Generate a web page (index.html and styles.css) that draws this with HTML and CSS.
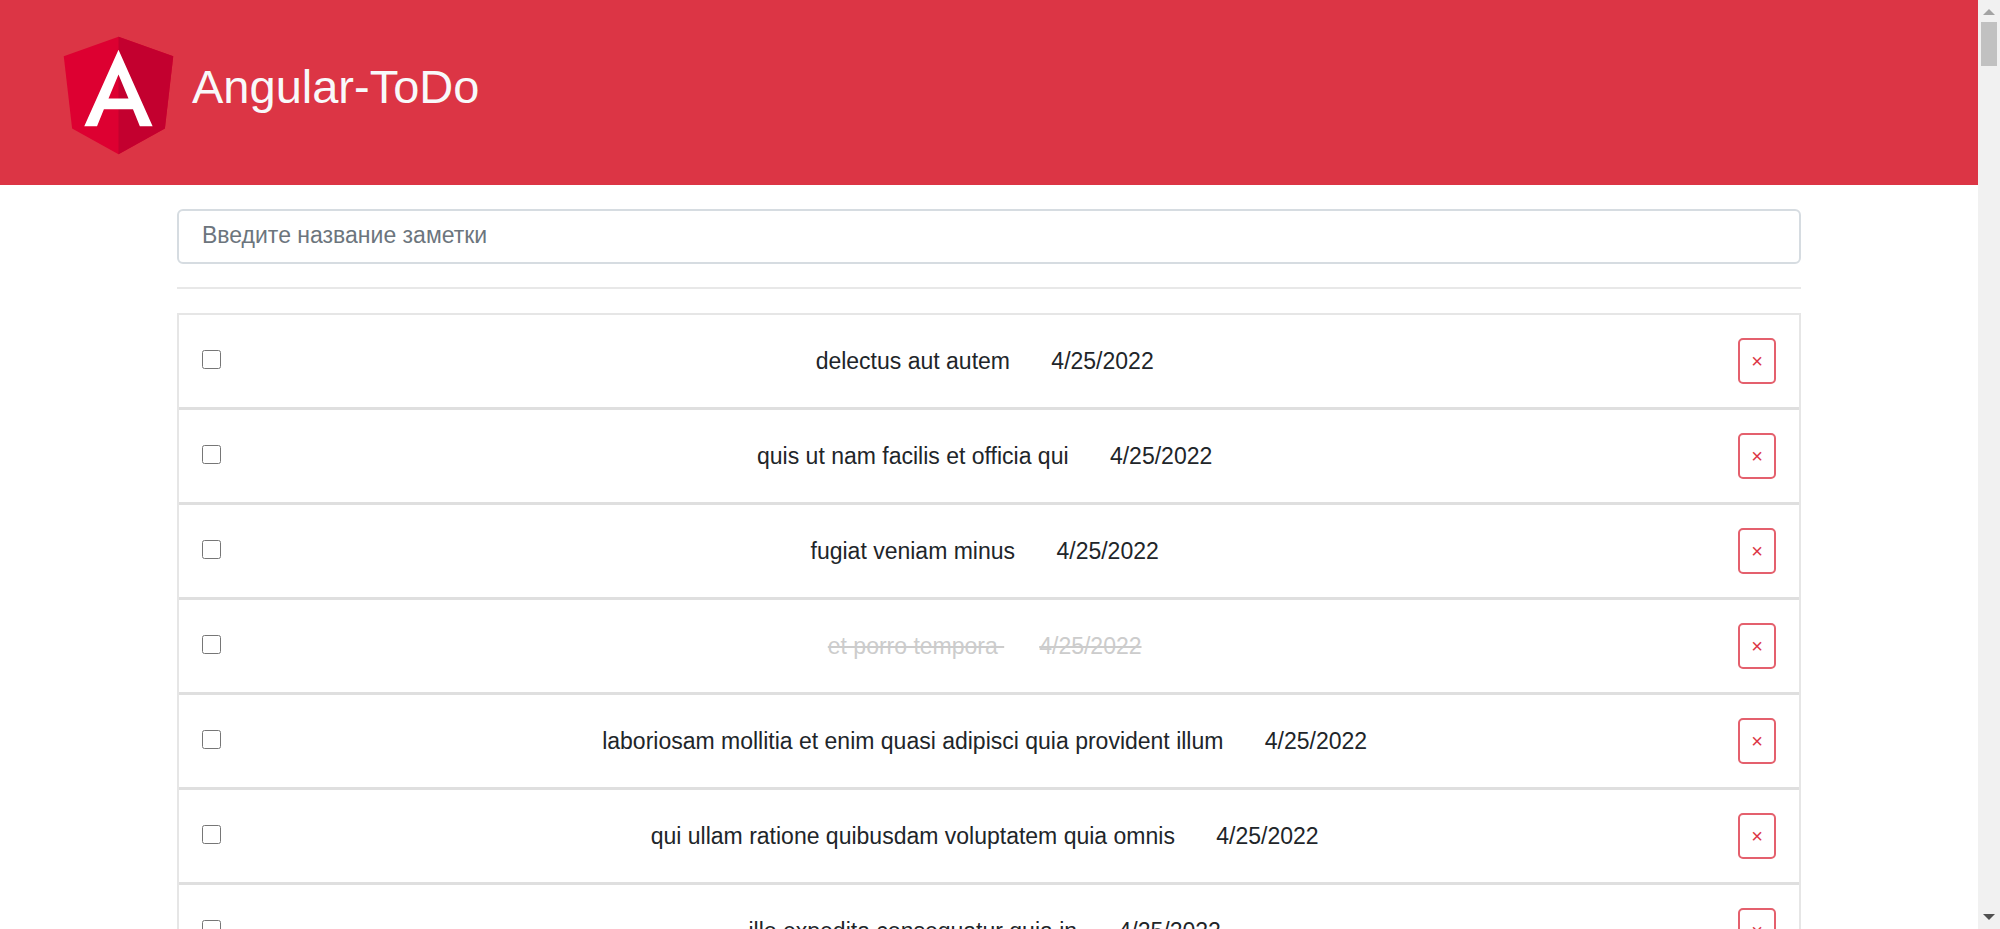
FILE: index.html
```html
<!DOCTYPE html>
<html lang="ru">
<head>
<meta charset="utf-8">
<meta name="viewport" content="width=device-width, initial-scale=1">
<title>Angular-ToDo</title>
<link rel="stylesheet" href="styles.css">
</head>
<body>
<div class="shell">
  <div class="page">
    <header class="header">
      <svg class="logo" viewBox="0 0 250 250" aria-hidden="true">
        <path fill="#dd0031" d="M125 30 31.900 63.200l14.200 123.100L125 230l78.900-43.700 14.200-123.100z"/>
        <path fill="#c3002f" d="M125 30v200l78.900-43.700 14.200-123.100z"/>
        <path fill="#fff" d="M125 52.100 66.800 182.600h21.700l11.700-29.200h49.400l11.700 29.200H183L125 52.100zm17 83.300h-34l17-40.900z"/>
      </svg>
      <h1 class="brand">Angular-ToDo</h1>
    </header>
    <main class="container">
      <input class="note-input" type="text" placeholder="Введите название заметки" aria-label="Введите название заметки">
      <hr class="divider">
      <ul class="list">
        <li class="row">
          <input class="check" type="checkbox" id="t1">
          <label class="task" for="t1">delectus aut autem <time class="date">4/25/2022</time></label>
          <button class="remove" type="button">×</button>
        </li>
        <li class="row">
          <input class="check" type="checkbox" id="t2">
          <label class="task" for="t2">quis ut nam facilis et officia qui <time class="date">4/25/2022</time></label>
          <button class="remove" type="button">×</button>
        </li>
        <li class="row">
          <input class="check" type="checkbox" id="t3">
          <label class="task" for="t3">fugiat veniam minus <time class="date">4/25/2022</time></label>
          <button class="remove" type="button">×</button>
        </li>
        <li class="row">
          <input class="check" type="checkbox" id="t4">
          <label class="task done" for="t4">et porro tempora <time class="date">4/25/2022</time></label>
          <button class="remove" type="button">×</button>
        </li>
        <li class="row">
          <input class="check" type="checkbox" id="t5">
          <label class="task" for="t5">laboriosam mollitia et enim quasi adipisci quia provident illum <time class="date">4/25/2022</time></label>
          <button class="remove" type="button">×</button>
        </li>
        <li class="row">
          <input class="check" type="checkbox" id="t6">
          <label class="task" for="t6">qui ullam ratione quibusdam voluptatem quia omnis <time class="date">4/25/2022</time></label>
          <button class="remove" type="button">×</button>
        </li>
        <li class="row">
          <input class="check" type="checkbox" id="t7">
          <label class="task" for="t7">illo expedita consequatur quia in <time class="date">4/25/2022</time></label>
          <button class="remove" type="button">×</button>
        </li>
      </ul>
    </main>
  </div>
  <div class="scrollbar" aria-hidden="true">
    <svg class="arrow" viewBox="0 0 22 22"><path fill="#a3a3a3" d="M5 15 11 9l6 6z"/></svg>
    <div class="track"><div class="thumb"></div></div>
    <svg class="arrow" viewBox="0 0 22 22"><path fill="#505050" d="M5 7h12l-6 6z"/></svg>
  </div>
</div>
</body>
</html>
```
FILE: styles.css
```css
* {
  box-sizing: border-box;
}

body {
  margin: 0;
  background: #fff;
  color: #212529;
  font-family: "Liberation Sans", Arial, sans-serif;
  font-size: 23px;
  line-height: 35px;
}

.shell {
  display: flex;
  height: 100vh;
  overflow: hidden;
}

.page {
  flex: 1;
  min-width: 0;
  overflow: hidden;
}

.header {
  display: flex;
  align-items: center;
  padding: 19px 45px;
  background: #dc3545;
}

.logo {
  width: 147px;
  height: 147px;
  flex: none;
}

.brand {
  margin: 0;
  padding-bottom: 12px;
  color: #f8f9fa;
  font-size: 47px;
  font-weight: 400;
  line-height: 56px;
}

.container {
  max-width: 1668px;
  margin: 0 auto;
  padding: 24px 22px;
}

.note-input {
  display: block;
  width: 100%;
  height: 55px;
  padding: 0 23px 2px;
  border: 2px solid #d6dce1;
  border-radius: 6px;
  background: #fff;
  color: #495057;
  font: inherit;
}

.note-input::placeholder {
  color: #6c757d;
  opacity: 1;
}

.divider {
  height: 2px;
  margin: 23px 0 24px;
  border: 0;
  background: #e8e8e8;
}

.list {
  margin: 0;
  padding: 0;
  border: 2px solid #e6e6e6;
  list-style: none;
}

.row {
  display: flex;
  align-items: center;
  justify-content: space-between;
  padding: 23px;
  border-bottom: 3px solid #dfdfdf;
}

.check {
  width: 19px;
  height: 19px;
  margin: 0 10px 3px 0;
}

.date {
  margin-left: 35px;
}

.done {
  color: #ccc;
  text-decoration: line-through;
}

.remove {
  height: 46px;
  padding: 0 11px;
  border: 2px solid #e4606d;
  border-radius: 5px;
  background: transparent;
  color: #dc3545;
  font: inherit;
  font-size: 20px;
}

.scrollbar {
  display: flex;
  flex-direction: column;
  width: 22px;
  flex: none;
  background: #f1f1f1;
}

.arrow {
  width: 22px;
  height: 22px;
  flex: none;
}

.track {
  flex: 1;
  padding: 0 3px;
}

.thumb {
  height: 5%;
  background: #c1c1c1;
}
```
